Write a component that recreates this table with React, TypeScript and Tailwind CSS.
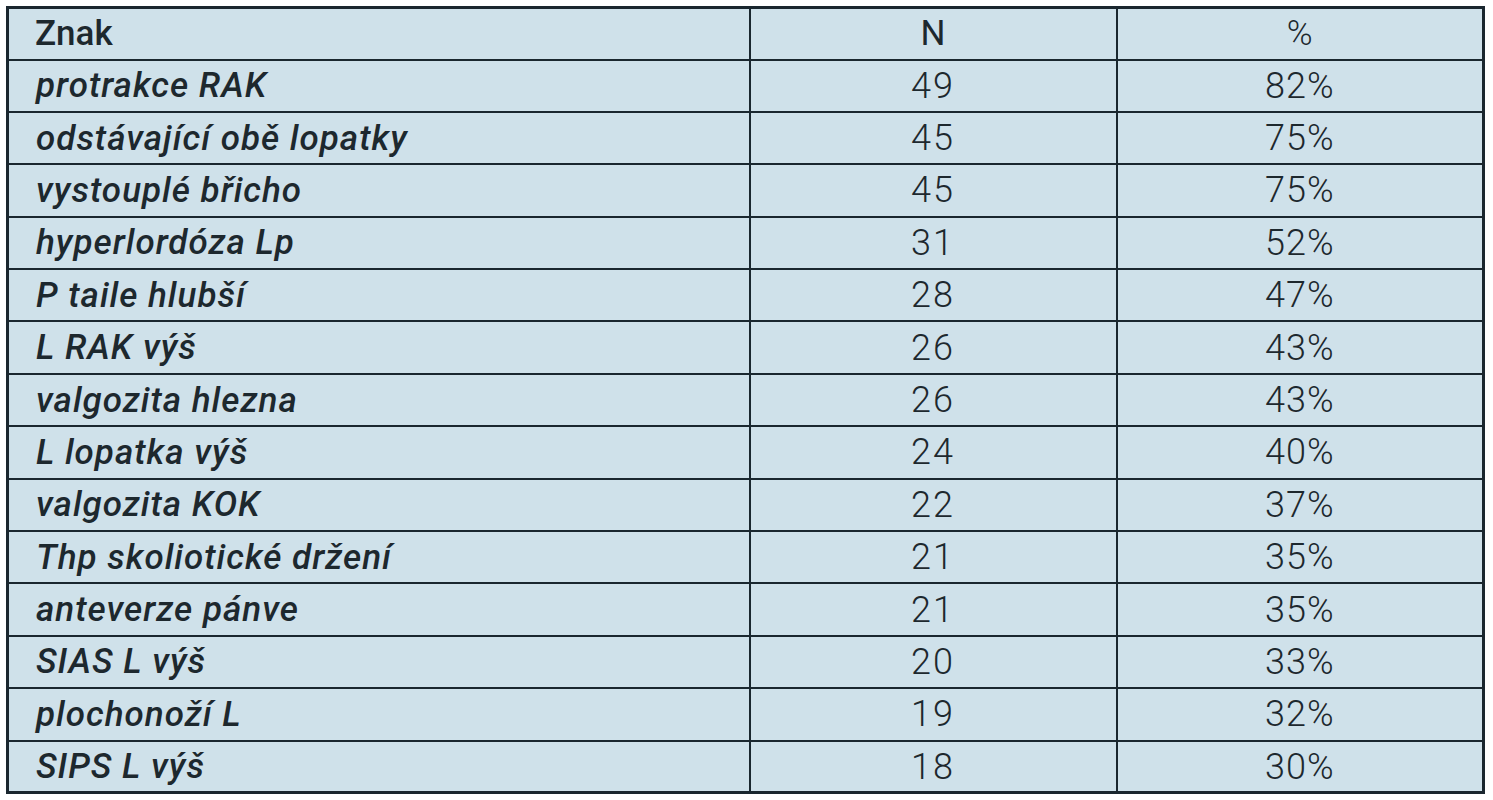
const rows: [string, number, string][] = [
  ["protrakce RAK", 49, "82%"],
  ["odstávající obě lopatky", 45, "75%"],
  ["vystouplé břicho", 45, "75%"],
  ["hyperlordóza Lp", 31, "52%"],
  ["P taile hlubší", 28, "47%"],
  ["L RAK výš", 26, "43%"],
  ["valgozita hlezna", 26, "43%"],
  ["L lopatka výš", 24, "40%"],
  ["valgozita KOK", 22, "37%"],
  ["Thp skoliotické držení", 21, "35%"],
  ["anteverze pánve", 21, "35%"],
  ["SIAS L výš", 20, "33%"],
  ["plochonoží L", 19, "32%"],
  ["SIPS L výš", 18, "30%"],
];

export default function App() {
  return (
    <div className="h-[800px] w-[1493px] bg-white pl-[6px] pt-[6px] font-['Roboto','Liberation_Sans',sans-serif] leading-none text-[#1d282e]">
      <table className="w-[1476px] table-fixed border-collapse border-[3px] border-[#1a272f] bg-[#cfe1ea]">
        <colgroup>
          <col className="w-[742px]" />
          <col className="w-[367px]" />
          <col className="w-[367px]" />
        </colgroup>
        <thead>
          <tr>
            <th className="h-[52px] border-[2px] border-[#1a272f] pl-[26px] text-left text-[35px] font-medium">
              Znak
            </th>
            <th className="h-[52px] border-[2px] border-[#1a272f] text-center text-[35px] font-normal">
              N
            </th>
            <th className="h-[52px] border-[2px] border-[#1a272f] text-center text-[35px] font-light">
              %
            </th>
          </tr>
        </thead>
        <tbody>
          {rows.map(([label, n, pct]) => (
            <tr key={label}>
              <td className="h-[52.4px] border-[2px] border-[#1a272f] pl-[27px] text-[35px] font-medium italic tracking-[1px]">
                {label}
              </td>
              <td className="h-[52.4px] border-[2px] border-[#1a272f] text-center text-[36px] font-light tracking-[2px]">
                {n}
              </td>
              <td className="h-[52.4px] border-[2px] border-[#1a272f] text-center text-[36px] font-light tracking-[1px]">
                {pct}
              </td>
            </tr>
          ))}
        </tbody>
      </table>
    </div>
  );
}
